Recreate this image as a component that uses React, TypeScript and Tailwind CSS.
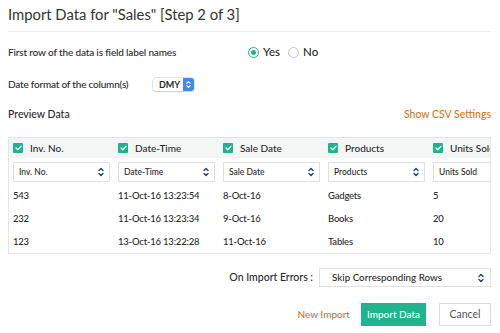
import React from 'react';

const columns = ['Inv. No.', 'Date-Time', 'Sale Date', 'Products', 'Units Sold'];

const rows = [
  ['543', '11-Oct-16 13:23:54', '8-Oct-16', 'Gadgets', '5'],
  ['232', '11-Oct-16 13:23:34', '9-Oct-16', 'Books', '20'],
  ['123', '13-Oct-16 13:22:28', '11-Oct-16', 'Tables', '10'],
];

function UpDown({ color = '#2e3d5a' }: { color?: string }) {
  return (
    <svg width="6" height="10" viewBox="0 0 6 10" fill="none">
      <path d="M1 3.5 L3 1.5 L5 3.5" stroke={color} strokeWidth="1.4" strokeLinecap="round" strokeLinejoin="round" />
      <path d="M1 6.5 L3 8.5 L5 6.5" stroke={color} strokeWidth="1.4" strokeLinecap="round" strokeLinejoin="round" />
    </svg>
  );
}

function Check() {
  return (
    <span className="flex h-[10px] w-[10px] shrink-0 items-center justify-center rounded-[1px] bg-[#1fb38d]">
      <svg width="7" height="6" viewBox="0 0 7 6" fill="none">
        <path d="M1 3 L2.8 4.7 L6 1.2" stroke="white" strokeWidth="1.3" strokeLinecap="round" strokeLinejoin="round" />
      </svg>
    </span>
  );
}

export default function App() {
  return (
    <div className="h-[333px] w-[500px] overflow-hidden bg-white pl-[8px] pr-[9px] text-[#2a2a2a] [font-family:Lato,'Liberation_Sans',sans-serif]">
      {/* Title */}
      <div className="h-[32px] border-b border-[#eeeeee] pt-[4px]">
        <h1 className="text-[14.8px] leading-[20px] text-[#333]">Import Data for "Sales" [Step 2 of 3]</h1>
      </div>

      {/* First row option */}
      <div className="mt-[12px] flex h-[16px] items-center">
        <span className="w-[240px] text-[10px] font-medium tracking-[-0.15px]">First row of the data is field label names</span>
        <div className="flex items-center text-[11.5px] font-medium">
          <span className="flex h-[11px] w-[11px] items-center justify-center rounded-full border border-[#1fb38d]">
            <span className="h-[5px] w-[5px] rounded-full bg-[#1fb38d]" />
          </span>
          <span className="ml-[4px]">Yes</span>
          <span className="ml-[8px] h-[11px] w-[11px] rounded-full border border-[#c8c8c8]" />
          <span className="ml-[4px]">No</span>
        </div>
      </div>

      {/* Date format */}
      <div className="mt-[16px] flex h-[16px] items-center">
        <span className="w-[145px] text-[10px] font-medium tracking-[-0.2px]">Date format of the column(s)</span>
        <div className="flex h-[13px] w-[41px] items-center rounded-[3px] bg-white shadow-[0_0_0_0.5px_#c9c9c9,0_1px_1px_rgba(0,0,0,0.15)]">
          <span className="flex-1 pl-[6px] text-[9px] font-bold leading-none">DMY</span>
          <span className="flex h-[13px] w-[11px] items-center justify-center rounded-r-[3px] bg-[#3d8bf2]">
            <svg width="5" height="9" viewBox="0 0 6 10" fill="none">
              <path d="M1 3.5 L3 1.5 L5 3.5" stroke="white" strokeWidth="1.4" strokeLinecap="round" strokeLinejoin="round" />
              <path d="M1 6.5 L3 8.5 L5 6.5" stroke="white" strokeWidth="1.4" strokeLinecap="round" strokeLinejoin="round" />
            </svg>
          </span>
        </div>
      </div>

      {/* Preview heading */}
      <div className="mt-[15px] flex h-[16px] items-center justify-between text-[10.5px] font-medium">
        <span>Preview Data</span>
        <span className="text-[#d2772c]">Show CSV Settings</span>
      </div>

      {/* Table */}
      <div className="mt-[14px] h-[117px] overflow-hidden border border-[#e3e6e6]">
        <div className="flex h-[20px] w-max bg-[#f4f6f6]">
          {columns.map((c) => (
            <div key={c} className="flex w-[105px] shrink-0 items-center gap-[7px] pl-[4px]">
              <Check />
              <span className="whitespace-nowrap text-[10px] font-medium">{c}</span>
            </div>
          ))}
        </div>
        <div className="flex w-max pt-[4px]">
          {columns.map((c) => (
            <div key={c} className="w-[105px] shrink-0 pl-[4px]">
              <div className="flex h-[20px] w-[97px] items-center justify-between border border-[#e0e0e0] pl-[5px] pr-[5px]">
                <span className="whitespace-nowrap text-[8.5px] font-medium">{c}</span>
                <UpDown />
              </div>
            </div>
          ))}
        </div>
        <div className="pt-[3px]">
          {rows.map((r, i) => (
            <div key={i} className="flex h-[23px] w-max items-center">
              {r.map((cell, j) => (
                <div key={j} className="w-[105px] shrink-0 whitespace-nowrap pl-[4px] text-[9.5px] font-medium tracking-[-0.2px]">
                  {cell}
                </div>
              ))}
            </div>
          ))}
        </div>
      </div>

      {/* Import errors */}
      <div className="mt-[14px] flex h-[19px] items-center justify-end">
        <span className="mr-[6px] text-[10.5px] font-medium">On Import Errors :</span>
        <div className="flex h-[19px] w-[172px] items-center justify-between border border-[#e0e0e0] pl-[12px] pr-[6px]">
          <span className="text-[9.8px] font-medium">Skip Corresponding Rows</span>
          <UpDown />
        </div>
      </div>

      {/* Buttons */}
      <div className="mt-[16px] flex h-[23px] items-center justify-end">
        <span className="mr-[11px] text-[10px] font-medium text-[#d2772c]">New Import</span>
        <button className="mr-[13px] h-[23px] w-[65px] bg-[#20b38d] text-[10px] font-medium text-white">Import Data</button>
        <button className="h-[23px] w-[52px] border border-[#dcdcdc] bg-white text-[10.5px] text-[#555]">Cancel</button>
      </div>
    </div>
  );
}
